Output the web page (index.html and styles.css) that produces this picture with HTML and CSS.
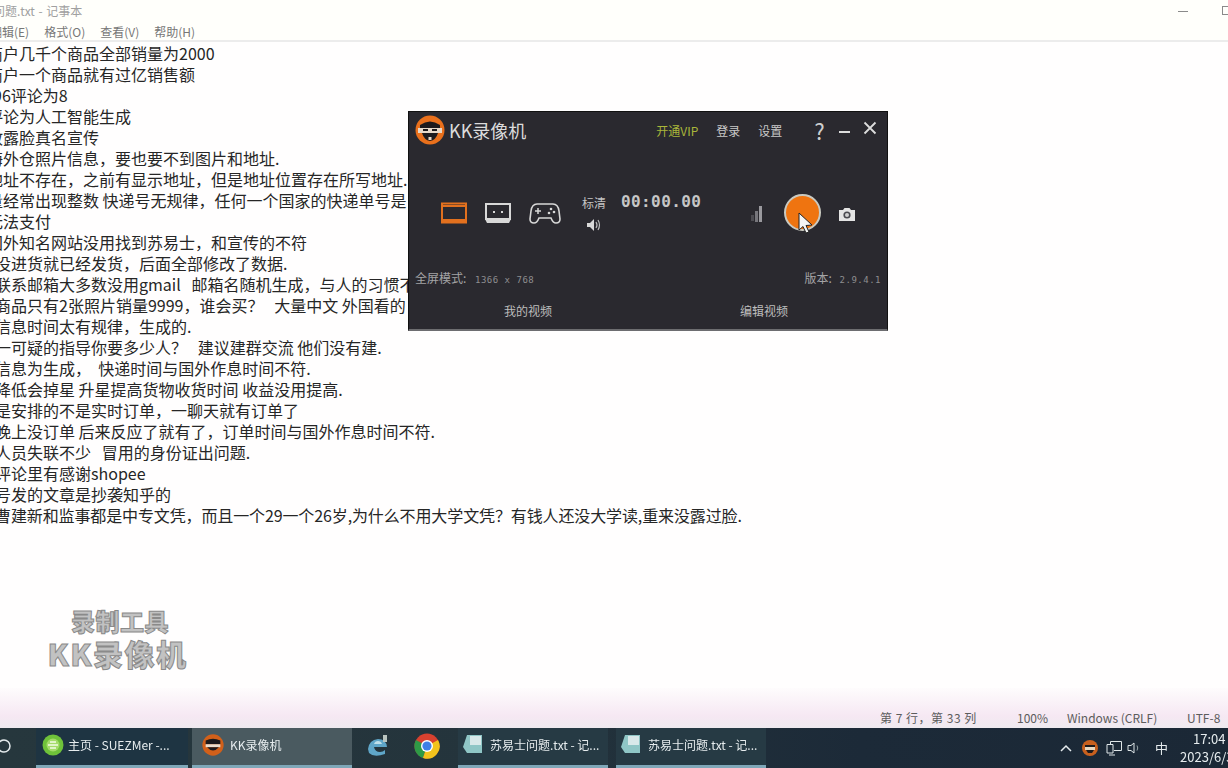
FILE: index.html
```html
<!DOCTYPE html>
<html lang="zh-CN">
<head>
    <meta charset="UTF-8">
    <title>苏易士问题.txt - 记事本</title>
    <link rel="stylesheet" href="styles.css">
</head>
<body>
    <div id="desktop">
        <div class="titlebar">
            <span class="title-text">问题.txt - 记事本</span>
            <span class="win-min"></span>
            <span class="win-max"></span>
        </div>
        <div class="menubar">
            <span class="menu-first">编辑(E)</span>
            <span>格式(O)</span>
            <span>查看(V)</span>
            <span>帮助(H)</span>
        </div>

        <div class="editor">
            <div class="notes notes-top">
                <p>商户几千个商品全部销量为2000</p>
                <p>商户一个商品就有过亿销售额</p>
                <p class="odd-start">96评论为8</p>
                <p>评论为人工智能生成</p>
                <p>敢露脸真名宣传</p>
                <p>海外仓照片信息，要也要不到图片和地址.</p>
                <p>地址不存在，之前有显示地址，但是地址位置存在所写地址.</p>
                <p>量经常出现整数 快递号无规律，任何一个国家的快递单号是</p>
                <p>无法支付</p>
                <p>国外知名网站没用找到苏易士，和宣传的不符</p>
            </div>
            <div class="notes notes-bottom">
                <p>没进货就已经发货，后面全部修改了数据.</p>
                <p>联系邮箱大多数没用gmail&nbsp;&nbsp; 邮箱名随机生成，与人的习惯不</p>
                <p>商品只有2张照片销量9999，谁会买？&nbsp;&nbsp; 大量中文 外国看的</p>
                <p>信息时间太有规律，生成的.</p>
                <p>一可疑的指导你要多少人？&nbsp;&nbsp; 建议建群交流 他们没有建.</p>
                <p>信息为生成，&nbsp; 快递时间与国外作息时间不符.</p>
                <p>降低会掉星 升星提高货物收货时间 收益没用提高.</p>
                <p>是安排的不是实时订单，一聊天就有订单了</p>
                <p>晚上没订单 后来反应了就有了，订单时间与国外作息时间不符.</p>
                <p>人员失联不少&nbsp;&nbsp; 冒用的身份证出问题.</p>
                <p>评论里有感谢shopee</p>
                <p>号发的文章是抄袭知乎的</p>
                <p class="tight">曹建新和监事都是中专文凭，而且一个29一个26岁,为什么不用大学文凭？有钱人还没大学读,重来没露过脸.</p>
            </div>
        </div>

        <div class="statusbar">
            <span class="st-pos">第 7 行，第 33 列</span>
            <span class="st-zoom">100%</span>
            <span class="st-eol">Windows (CRLF)</span>
            <span class="st-enc">UTF-8</span>
        </div>

        <div class="taskbar">
            <div class="search-slot">
                <svg width="14" height="16" viewBox="0 0 14 16"><circle cx="4" cy="7" r="6" fill="none" stroke="#e4eaec" stroke-width="1.5"/><path d="M0 12 L-3 16" stroke="#e4eaec" stroke-width="1.5"/></svg>
            </div>
            <div class="task task-browser">
                <svg width="22" height="24" viewBox="0 0 22 24"><circle cx="11" cy="12" r="10.5" fill="#6fc23a"/><circle cx="11" cy="12" r="6.5" fill="#a4dc6a"/><path d="M6 12 h10 M8 9 h6 M8 15 h6" stroke="#f2fbe8" stroke-width="1.6"/></svg>
                <span>主页 - SUEZMer -...</span>
            </div>
            <div class="task task-active">
                <svg width="22" height="24" viewBox="0 0 30 30"><circle cx="15" cy="15" r="14.5" fill="#d2601a"/><path d="M5 9 Q15 4 25 9 V14 H5 Z" fill="#1c1a1c"/><path d="M5 14 H25 V18 H5 Z" fill="#eadfd0"/><path d="M7 18 Q15 27 23 18 Z" fill="#1c1a1c"/></svg>
                <span>KK录像机</span>
            </div>
            <div class="pin pin-edge">
                <svg width="24" height="24" viewBox="0 0 24 24"><path d="M2 15 Q3 6 12 5 Q20 5 21 13 H8 Q9 18 14 18 Q17 18 19 16 V20 Q8 24 3 19 Z" fill="#5fa6c8"/><path d="M8 10 H16 Q15 7 12 7 Q9 7 8 10 Z" fill="#bfe0ea"/><rect x="17" y="1" width="4" height="7" fill="#b9c4bf"/></svg>
            </div>
            <div class="pin pin-chrome">
                <svg width="26" height="26" viewBox="0 0 26 26"><circle cx="13" cy="13" r="12.5" fill="#d8412f"/><path d="M13 13 L2 7 A12.5 12.5 0 0 0 9 25 Z" fill="#2e9a46"/><path d="M13 13 L24 7 A12.5 12.5 0 0 1 9 25 Z" fill="#f2c21c"/><circle cx="13" cy="13" r="6" fill="#fff"/><circle cx="13" cy="13" r="4.6" fill="#3f7fe6"/></svg>
            </div>
            <div class="task task-note">
                <svg width="22" height="24" viewBox="0 0 22 24"><path d="M5 2 H20 V20 H5 L1 14 Z" fill="#8fc6c6"/><path d="M8 3 H19 V12 H8 Z" fill="#d9e9ea"/></svg>
                <span>苏易士问题.txt - 记...</span>
            </div>
            <div class="task task-note">
                <svg width="22" height="24" viewBox="0 0 22 24"><path d="M5 2 H20 V20 H5 L1 14 Z" fill="#8fc6c6"/><path d="M8 3 H19 V12 H8 Z" fill="#d9e9ea"/></svg>
                <span>苏易士问题.txt - 记...</span>
            </div>
            <div class="tray">
                <svg class="tray-up" width="12" height="8" viewBox="0 0 12 8"><path d="M1 7 L6 2 L11 7" fill="none" stroke="#e6ecee" stroke-width="1.5"/></svg>
                <svg class="tray-kk" width="16" height="16" viewBox="0 0 16 16"><circle cx="8" cy="8" r="8" fill="#c8601e"/><path d="M3 5 H13 V7 H3 Z" fill="#1c1a1c"/><path d="M3 7 H13 V10 H3 Z" fill="#e8d8c0"/><path d="M4 10 H12 L10 13 H6 Z" fill="#1c1a1c"/></svg>
                <svg class="tray-net" width="16" height="16" viewBox="0 0 16 16"><path d="M4.5 1.5 H15.5 V10.5 H8 M4.5 1.5 V4 M1 4.5 H7 V13 H1 Z M3 15 H9" fill="none" stroke="#dfe6e8" stroke-width="1"/></svg>
                <svg class="tray-vol" width="16" height="16" viewBox="0 0 16 16"><path d="M1 5.5 H4 L7 3 V13 L4 10.5 H1 Z" fill="none" stroke="#dfe6e8" stroke-width="1"/><path d="M10 5.5 Q11.5 8 10 10.5" fill="none" stroke="#9aa6aa" stroke-width="1"/></svg>
                <span class="tray-ime">中</span>
                <div class="clock">
                    <span class="clock-time">17:04</span>
                    <span class="clock-date">2023/6/3</span>
                </div>
            </div>
        </div>

        <div class="watermark">
            <span class="wm-top">录制工具</span>
            <span class="wm-bottom">KK录像机</span>
        </div>

        <div class="kk-window">
            <div class="kk-head">
                <svg class="kk-logo" width="30" height="32" viewBox="0 0 30 32">
                    <circle cx="15" cy="16" r="14.5" fill="#e9701c"/>
                    <path d="M5 11 Q15 4 25 11 V15 H5 Z" fill="#1d1a1c"/>
                    <path d="M3 14 H27 V19 H3 Z" fill="#e8d9c8"/>
                    <path d="M8 15 H13 V17 H8 Z M17 15 H22 V17 H17 Z" fill="#1d1a1c"/>
                    <path d="M7 19 H23 Q21 26 15 27 Q9 26 7 19 Z" fill="#1d1a1c"/>
                    <rect x="13.5" y="23" width="3" height="3" fill="#e8d9c8"/>
                </svg>
                <span class="kk-name">KK录像机</span>
                <span class="kk-vip">开通VIP</span>
                <span class="kk-link kk-login">登录</span>
                <span class="kk-link kk-set">设置</span>
                <span class="kk-help">?</span>
                <span class="kk-min"></span>
                <svg class="kk-close" width="14" height="14" viewBox="0 0 14 14"><path d="M1.5 1.5 L12.5 12.5 M12.5 1.5 L1.5 12.5" stroke="#dddddd" stroke-width="1.8"/></svg>
            </div>

            <div class="kk-main">
                <svg class="mode mode-screen" width="26" height="22" viewBox="0 0 26 22"><rect x="1" y="1.5" width="24" height="19" fill="none" stroke="#e2701e" stroke-width="2"/><rect x="1" y="3" width="24" height="2" fill="#e2701e"/><rect x="1" y="17" width="24" height="4" fill="#e2701e"/></svg>
                <svg class="mode mode-window" width="28" height="22" viewBox="0 0 28 22"><rect x="2" y="2" width="24" height="15" fill="none" stroke="#d8d8d8" stroke-width="2"/><rect x="1" y="1" width="26" height="2" fill="#d8d8d8"/><path d="M1 17 H27 L25 21 H3 Z" fill="#d8d8d8"/><rect x="9" y="9" width="2" height="2" fill="#d8d8d8"/><rect x="17" y="9" width="2" height="2" fill="#d8d8d8"/></svg>
                <svg class="mode mode-game" width="32" height="24" viewBox="0 0 32 24"><path d="M8 3 H24 Q29 3 30 10 L31 18 Q31 22 27 22 Q24 22 22 17 H10 Q8 22 5 22 Q1 22 1 18 L2 10 Q3 3 8 3 Z" fill="none" stroke="#d8d8d8" stroke-width="1.6"/><path d="M6 10 H12 M9 7 V13" stroke="#d8d8d8" stroke-width="1.5"/><circle cx="22" cy="8" r="1.3" fill="#d8d8d8"/><circle cx="25" cy="11" r="1.3" fill="#d8d8d8"/><circle cx="20" cy="12" r="1.3" fill="#d8d8d8"/></svg>

                <div class="quality">
                    <span>标清</span>
                    <svg width="16" height="14" viewBox="0 0 16 14"><path d="M1 5 H4 L8 1 V13 L4 9 H1 Z" fill="#d8d8d8"/><path d="M10 4 Q12 7 10 10 M12 2 Q15 7 12 12" fill="none" stroke="#bbbbbb" stroke-width="1.2"/></svg>
                </div>
                <span class="timer">00:00.00</span>

                <svg class="level" width="12" height="18" viewBox="0 0 12 18"><rect x="0" y="11" width="3" height="6" fill="#4d4c52"/><rect x="4" y="7" width="3" height="11" fill="#77767c"/><rect x="8" y="2" width="3" height="16" fill="#9a999e"/></svg>
                <div class="rec-btn"></div>
                <svg class="camera" width="18" height="15" viewBox="0 0 18 15"><path d="M1 3 H5 L6.5 1 H11.5 L13 3 H17 V14 H1 Z" fill="#e4e4e4"/><circle cx="9" cy="8" r="3.6" fill="#4a4a50"/><circle cx="9" cy="8" r="2" fill="#d0d0d0"/></svg>
                <svg class="cursor" width="18" height="24" viewBox="0 0 18 24"><path d="M2 1 L2 18 L6 14.5 L9 21 L12 20 L9 13.5 L15 13 Z" fill="#f4f4f4" stroke="#222222" stroke-width="1"/></svg>
            </div>

            <div class="kk-info">
                <span>全屏模式: <i>1366 x 768</i></span>
                <span>版本: <i class="ver">2.9.4.1</i></span>
            </div>
            <div class="kk-tabs">
                <span>我的视频</span>
                <span>编辑视频</span>
            </div>
        </div>
    </div>
</body>
</html>
```

FILE: styles.css
```css
* {
    box-sizing: border-box;
}
html, body {
    margin: 0;
    height: 100%;
    overflow: hidden;
}
body {
    font-family: "Noto Sans CJK SC", "Noto Sans", sans-serif;
    background: #fffefe;
}
#desktop {
    position: relative;
    width: 1228px;
    height: 768px;
    display: flex;
    flex-direction: column;
    overflow: hidden;
    filter: blur(0.35px);
}

/* notepad */
.titlebar {
    height: 22px;
    flex: none;
    display: flex;
    align-items: center;
    background: #fffffb;
    font-size: 12px;
    color: #a0a0a0;
}
.title-text {
    margin-left: -7px;
    line-height: 22px;
    word-spacing: 1px;
}
.win-min {
    width: 10px;
    height: 1px;
    margin-left: auto;
    background: #8a8a8a;
}
.win-max {
    width: 10px;
    height: 9px;
    margin-left: 34px;
    margin-right: -4px;
    margin-top: -2px;
    border: 1px solid #8a8a8a;
}
.menubar {
    height: 20px;
    flex: none;
    display: flex;
    align-items: center;
    gap: 15px;
    background: #fffffb;
    border-bottom: 2px solid #ececec;
    font-size: 12px;
    color: #777;
}
.menu-first {
    margin-left: -10px;
}
.editor {
    flex: 1;
    padding-top: 1px;
    overflow: hidden;
    font-size: 16px;
    line-height: 21px;
    color: #262626;
    background: #fffefe;
}
.notes p {
    margin: 0;
    white-space: pre;
}
.notes-top {
    margin-left: -13px;
}
.notes-bottom {
    margin-left: -5px;
}
.notes .odd-start {
    margin-left: 6px;
}
.notes .tight {
    letter-spacing: -0.12px;
}
.statusbar {
    height: 40px;
    flex: none;
    position: relative;
    padding-top: 22px;
    display: flex;
    font-size: 12px;
    line-height: 16px;
    color: #5c5c5c;
    background: linear-gradient(#fefcfd, #f6e8f3 70%, #eeeaef);
}
.st-pos {
    margin-left: 880px;
    width: 137px;
    letter-spacing: 0.5px;
}
.st-zoom {
    width: 50px;
}
.st-eol {
    width: 120px;
}

/* taskbar */
.taskbar {
    height: 40px;
    flex: none;
    display: flex;
    align-items: stretch;
    background: linear-gradient(90deg, #26373d, #24343c 40%, #1c2a38 70%, #1b2836);
    color: #e6ecee;
    font-size: 12px;
}
.search-slot {
    width: 36px;
    flex: none;
    display: flex;
    align-items: center;
    padding-bottom: 2px;
}
.task {
    flex: none;
    display: flex;
    align-items: center;
    gap: 6px;
    padding: 0 4px 4px 6px;
    border-bottom: 3px solid #7fa7b8;
    white-space: nowrap;
    overflow: hidden;
}
.task-browser {
    width: 152px;
    margin-right: 4px;
    gap: 4px;
    background: #1e3442;
}
.task-active {
    width: 160px;
    padding-left: 10px;
    background: #4a5a60;
}
.pin {
    flex: none;
    display: flex;
    align-items: center;
    justify-content: center;
    padding-bottom: 4px;
}
.pin-edge {
    width: 50px;
    margin-left: 1px;
}
.pin-chrome {
    width: 48px;
    margin-right: 7px;
}
.task-note {
    width: 150px;
    margin-right: 8px;
    padding-left: 4px;
    background: #263a44;
}
.tray {
    flex: none;
    display: flex;
    align-items: center;
    padding-bottom: 1px;
}
.tray-up {
    margin-left: 286px;
}
.tray-kk {
    margin-left: 10px;
}
.tray-net {
    margin-left: 8px;
}
.tray-vol {
    margin-left: 5px;
}
.tray-ime {
    margin-left: 12px;
    font-size: 13px;
}
.clock {
    display: flex;
    flex-direction: column;
    align-items: flex-start;
    margin-left: 12px;
    width: 60px;
    flex: none;
    font-size: 13px;
    line-height: 18px;
    white-space: nowrap;
}
.clock-time {
    margin-left: 13px;
}

/* floating bits */
.watermark {
    position: absolute;
    left: 40px;
    top: 605px;
    width: 160px;
    display: flex;
    flex-direction: column;
    align-items: center;
    font-weight: 900;
    color: #c2c2c2;
    -webkit-text-stroke: 1px #8a8a8a;
    text-shadow: 0 0 1px #fff;
}
.wm-top {
    font-size: 24px;
    line-height: 32px;
    letter-spacing: 0.5px;
}
.wm-bottom {
    font-size: 30px;
    line-height: 32px;
    letter-spacing: 1.5px;
    margin-right: 5px;
}

/* recorder */
.kk-window {
    position: absolute;
    left: 408px;
    top: 111px;
    width: 480px;
    height: 220px;
    display: flex;
    flex-direction: column;
    background: #2a292f;
    border: 1px solid #111;
    border-bottom: 2px solid #6d6d70;
    color: #d8d8d8;
}
.kk-head {
    height: 36px;
    flex: none;
    display: flex;
    align-items: center;
    padding: 0 6px;
    font-size: 12px;
    white-space: nowrap;
}
.kk-name {
    margin-left: 4px;
    font-size: 18px;
    line-height: 36px;
    color: #dcdcdc;
}
.kk-vip {
    margin-left: 130px;
    color: #a9b63a;
}
.kk-login {
    margin-left: 18px;
}
.kk-set {
    margin-left: 18px;
}
.kk-link {
    color: #c8c8c8;
}
.kk-help {
    margin-left: 32px;
    font-size: 22px;
    line-height: 26px;
    color: #cfcfcf;
}
.kk-min {
    width: 11px;
    height: 2px;
    margin-left: 14px;
    margin-top: 4px;
    background: #dddddd;
}
.kk-close {
    margin-left: 13px;
    margin-bottom: 4px;
}
.kk-main {
    position: relative;
    height: 72px;
    flex: none;
    margin-top: 29px;
    display: flex;
    align-items: center;
    padding-left: 32px;
}
.mode-window {
    margin-left: 17px;
}
.mode-game {
    margin-left: 17px;
}
.quality {
    margin-left: 21px;
    width: 24px;
    display: flex;
    flex-direction: column;
    align-items: center;
    gap: 6px;
    font-size: 12px;
    line-height: 18px;
    color: #c4c4c4;
}
.timer {
    margin-left: 15px;
    margin-bottom: 24px;
    font-family: "DejaVu Sans Mono", monospace;
    font-size: 16px;
    font-weight: bold;
    letter-spacing: 0.4px;
    color: #c6c6c6;
}
.level {
    margin-left: 50px;
}
.rec-btn {
    width: 37px;
    height: 37px;
    margin-left: 21px;
    margin-bottom: 2px;
    border-radius: 50%;
    background: #ef7410;
    border: 2px solid #c9c9c0;
}
.camera {
    margin-left: 17px;
    margin-top: 2px;
}
.cursor {
    position: absolute;
    left: 388px;
    top: 35px;
}
.kk-info {
    margin-top: 21px;
    flex: none;
    display: flex;
    justify-content: space-between;
    padding: 0 6px;
    font-size: 12px;
    line-height: 16px;
    color: #a4a4a6;
}
.kk-info i {
    margin-left: 6px;
    font-style: normal;
    font-family: "DejaVu Sans Mono", monospace;
    font-size: 9px;
    letter-spacing: 0.5px;
    color: #8e8e90;
}
.kk-info .ver {
    margin-left: 5px;
}
.kk-tabs {
    margin-top: 14px;
    flex: none;
    display: flex;
    font-size: 12px;
    line-height: 18px;
    color: #bdbdbd;
}
.kk-tabs span:first-child {
    margin-left: 95px;
}
.kk-tabs span:last-child {
    margin-left: 188px;
}
```
